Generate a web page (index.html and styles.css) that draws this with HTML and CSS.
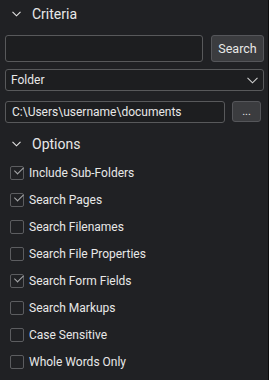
FILE: index.html
```html
<!DOCTYPE html>
<html lang="en">
<head>
  <meta charset="UTF-8">
  <title>Search</title>
  <link rel="stylesheet" href="styles.css">
</head>
<body>
  <div class="panel">
    <div class="section-head">
      <svg class="chev" width="9" height="6" viewBox="0 0 9 6"><path d="M0.5 0.8 L4.5 4.8 L8.5 0.8" fill="none" stroke="#e6e6e6" stroke-width="1.1"/></svg>
      <span>Criteria</span>
    </div>
    <div class="criteria">
      <div class="row">
        <div class="field grow"></div>
        <div class="btn btn-search">Search</div>
      </div>
      <div class="field select">
        <span>Folder</span>
        <svg width="11" height="7" viewBox="0 0 11 7"><path d="M0.5 0.8 L5.5 5.8 L10.5 0.8" fill="none" stroke="#cfcfcf" stroke-width="1.1"/></svg>
      </div>
      <div class="row path-row">
        <div class="field grow path">C:\Users\username\documents</div>
        <div class="btn btn-dots">...</div>
      </div>
    </div>
    <div class="section-head options-head">
      <svg class="chev" width="9" height="6" viewBox="0 0 9 6"><path d="M0.5 0.8 L4.5 4.8 L8.5 0.8" fill="none" stroke="#e6e6e6" stroke-width="1.1"/></svg>
      <span>Options</span>
    </div>
    <ul class="options">
      <li><span class="box on"></span>Include Sub-Folders</li>
      <li><span class="box on"></span>Search Pages</li>
      <li><span class="box"></span>Search Filenames</li>
      <li><span class="box"></span>Search File Properties</li>
      <li><span class="box on"></span>Search Form Fields</li>
      <li><span class="box"></span>Search Markups</li>
      <li><span class="box"></span>Case Sensitive</li>
      <li><span class="box"></span>Whole Words Only</li>
    </ul>
  </div>
</body>
</html>
```

FILE: styles.css
```css
* { margin: 0; padding: 0; box-sizing: border-box; }
html, body {
  width: 100%;
  height: 100%;
  background: #202124;
}
body {
  font-family: Roboto, "Liberation Sans", sans-serif;
  color: #e8e8e8;
  font-size: 12px;
}
.panel {
  height: 380px;
  border-right: 1px solid #0c0c0d;
}
.section-head {
  height: 27px;
  display: flex;
  align-items: center;
  padding-left: 12px;
  font-size: 14px;
}
.section-head .chev {
  margin-right: 11px;
}
.criteria {
  padding: 8px 4px 0 5px;
  display: flex;
  flex-direction: column;
  gap: 7px;
}
.row {
  display: flex;
  gap: 8px;
}
.field {
  height: 27px;
  border: 1px solid #58595b;
  border-radius: 3px;
  background: #1d1e20;
}
.grow { flex: 1; }
.btn {
  background: #3b3c3f;
  border: 1px solid #55565a;
  border-radius: 3px;
  display: flex;
  align-items: center;
  justify-content: center;
  font-size: 12.5px;
}
.btn-search {
  width: 53px;
  height: 27px;
}
.select {
  height: 22px;
  display: flex;
  align-items: center;
  justify-content: space-between;
  padding: 0 5px 0 5px;
}
.path-row {
  margin-top: 3px;
  padding-right: 3px;
  gap: 7px;
}
.path {
  height: 22px;
  display: flex;
  align-items: center;
  padding-left: 6px;
}
.btn-dots {
  width: 29px;
  height: 21px;
  font-size: 11px;
}
.options-head {
  margin-top: 7px;
}
.options {
  list-style: none;
  padding: 2px 0 0 10px;
}
.options li {
  height: 27px;
  display: flex;
  align-items: center;
}
.box {
  width: 14px;
  height: 14px;
  border: 1px solid #5c5d60;
  border-radius: 2px;
  margin-right: 5px;
  position: relative;
}
.box.on::after {
  content: "";
  position: absolute;
  left: 3px;
  top: 1px;
  width: 8px;
  height: 4px;
  border-left: 1px solid #a9aaac;
  border-bottom: 1px solid #a9aaac;
  transform: translate(0, 3px) rotate(-45deg);
  transform-origin: left top;
}
```
